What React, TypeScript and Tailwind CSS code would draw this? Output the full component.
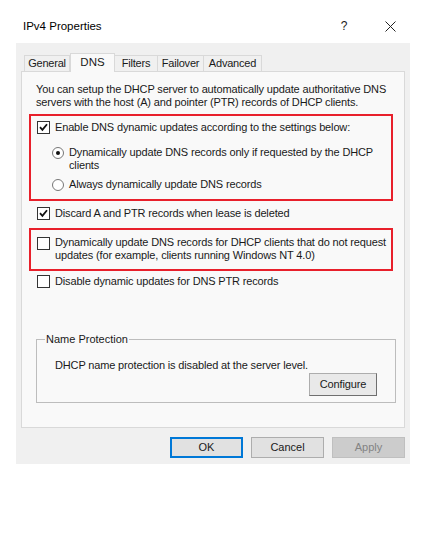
import React from 'react';

const font = { fontFamily: '"Liberation Sans", Arial, sans-serif' };

function CheckBox({ checked }: { checked?: boolean }) {
  return (
    <span className="flex h-[13px] w-[13px] shrink-0 items-center justify-center border border-[#333333] bg-white">
      {checked && (
        <svg width="9" height="9" viewBox="0 0 9 9">
          <path d="M1 4.2 L3.4 6.8 L8 1.2" fill="none" stroke="#111" strokeWidth="1.8" />
        </svg>
      )}
    </span>
  );
}

function Radio({ checked }: { checked?: boolean }) {
  return (
    <span className="flex h-[12px] w-[12px] shrink-0 items-center justify-center rounded-full border border-[#777777] bg-white">
      {checked && <span className="h-[4px] w-[4px] rounded-full bg-[#111]" />}
    </span>
  );
}

const tabs = [
  { label: 'General', w: 'w-[46px]' },
  { label: 'DNS', w: 'w-[45px]' },
  { label: 'Filters', w: 'w-[43px]' },
  { label: 'Failover', w: 'w-[46px]' },
  { label: 'Advanced', w: 'w-[58px]' },
];

export default function App() {
  return (
    <div className="h-[540px] w-[424px] bg-white text-[11px] leading-[13px] text-[#1a1a1a]" style={font}>
      <div className="ml-[16px] w-[394px]">
        {/* Title bar */}
        <div className="flex h-[43px] items-start pt-[20px]">
          <span className="ml-[7px] text-[11.5px] text-black">IPv4 Properties</span>
          <span className="ml-auto w-[12px] text-center text-[12px]">?</span>
          <svg className="ml-[35px] mr-[14px] mt-[1px]" width="11" height="11" viewBox="0 0 11 11">
            <path d="M0.5 0.5 L10.5 10.5 M10.5 0.5 L0.5 10.5" stroke="#222" strokeWidth="1" />
          </svg>
        </div>

        {/* Body */}
        <div className="h-[421px] bg-[#f0f0f0] px-[5px] pt-[9px]">
          {/* Tabs */}
          <div className="flex h-[19px] items-end pl-[3px]">
            {tabs.map(t =>
              t.label === 'DNS' ? (
                <div
                  key={t.label}
                  className={`relative z-10 -mb-px flex h-[19px] ${t.w} items-start justify-center border border-b-0 border-[#d9d9d9] bg-[#f9f9f9] pt-[2px] text-[11.5px]`}
                >
                  {t.label}
                </div>
              ) : (
                <div
                  key={t.label}
                  className={`flex h-[16px] ${t.w} items-center justify-center border border-b-0 border-l-0 border-[#d9d9d9] first:border-l bg-[#f0f0f0] text-[11px] tracking-[-0.2px]`}
                >
                  {t.label}
                </div>
              )
            )}
          </div>

          {/* Panel */}
          <div className="h-[357px] border border-[#d9d9d9] bg-[#f9f9f9] pt-[11px]">
            <p className="ml-[14px] tracking-[-0.15px]">
              You can setup the DHCP server to automatically update authoritative DNS
              <br />
              servers with the host (A) and pointer (PTR) records of DHCP clients.
            </p>

            <div className="ml-[7px] mt-[5px] h-[87px] w-[364px] border-2 border-[#e8202b] pt-[5px]">
              <label className="ml-[6px] flex items-center gap-[5px]">
                <CheckBox checked />
                <span className="tracking-[-0.15px]">Enable DNS dynamic updates according to the settings below:</span>
              </label>
              <label className="ml-[21px] mt-[12px] flex items-start gap-[5px]">
                <span className="pt-[1px]"><Radio checked /></span>
                <span className="tracking-[-0.15px]">
                  Dynamically update DNS records only if requested by the DHCP
                  <br />
                  clients
                </span>
              </label>
              <label className="ml-[21px] mt-[6px] flex items-center gap-[5px]">
                <Radio />
                <span className="tracking-[-0.15px]">Always dynamically update DNS records</span>
              </label>
            </div>

            <label className="ml-[15px] mt-[6px] flex items-center gap-[5px]">
              <CheckBox checked />
              <span className="tracking-[-0.15px]">Discard A and PTR records when lease is deleted</span>
            </label>

            <div className="ml-[7px] mt-[8px] h-[43px] w-[364px] border-2 border-[#e8202b] pt-[6px]">
              <label className="ml-[6px] flex items-start gap-[5px]">
                <span className="pt-[1px]"><CheckBox /></span>
                <span className="tracking-[-0.15px]">
                  Dynamically update DNS records for DHCP clients that do not request
                  <br />
                  updates (for example, clients running Windows NT 4.0)
                </span>
              </label>
            </div>

            <label className="ml-[15px] mt-[4px] flex items-center gap-[5px]">
              <CheckBox />
              <span className="tracking-[-0.15px]">Disable dynamic updates for DNS PTR records</span>
            </label>

            <fieldset className="ml-[14px] mt-[45px] h-[70px] w-[360px] border border-[#bdbdbd] px-[18px] pb-0 pt-[13px]">
              <legend className="-ml-[10px] px-[1px]">Name Protection</legend>
              <p className="tracking-[-0.15px]">DHCP name protection is disabled at the server level.</p>
              <div className="mt-[1px] flex justify-end">
                <button className="h-[23px] w-[68px] border border-[#adadad] border-b-[#6f6f6f] border-r-[#6f6f6f] bg-[#e9e9e9] text-[11px] tracking-[-0.15px]">
                  Configure
                </button>
              </div>
            </fieldset>
          </div>

          {/* Bottom buttons */}
          <div className="mt-[9px] flex justify-end gap-[8px]">
            <button className="h-[21px] w-[73px] border-2 border-[#0078d7] bg-[#e1e1e1] text-[11px]">OK</button>
            <button className="h-[21px] w-[73px] border border-[#adadad] bg-[#e1e1e1] text-[11px]">Cancel</button>
            <button className="h-[21px] w-[73px] border border-[#bfbfbf] bg-[#cccccc] text-[11px] text-[#838383]">Apply</button>
          </div>
        </div>
      </div>
    </div>
  );
}
